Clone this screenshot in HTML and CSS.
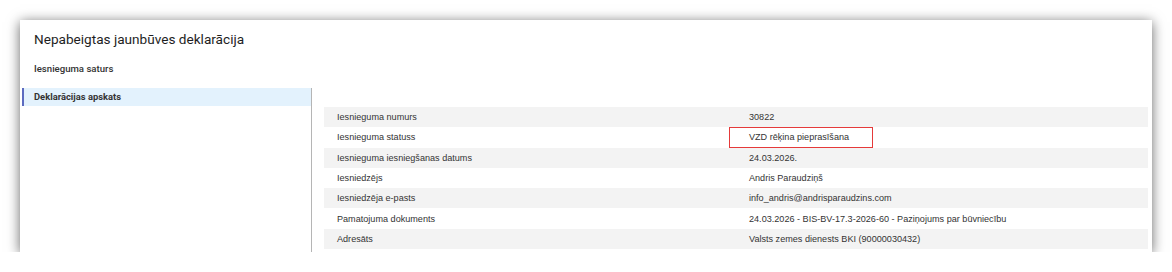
FILE: index.html
```html
<!DOCTYPE html>
<html>
  <head>
    <meta charset="UTF-8">
    <title>Nepabeigtas jaunbūves deklarācija</title>
    <link rel="stylesheet" href="styles.css">
  </head>
  <body>
    <div class="panel">
      <div class="head">
        <h1>Nepabeigtas jaunbūves deklarācija</h1>
        <h2>Iesnieguma saturs</h2>
      </div>
      <div class="main">
        <div class="side">
          <div class="side-item active">Deklarācijas apskats</div>
        </div>
        <div class="content">
          <div class="rows">
            <div class="row"><div class="cell">Iesnieguma numurs</div><div class="cell val">30822</div></div>
            <div class="row"><div class="cell">Iesnieguma statuss</div><div class="cell val"><span class="mark">VZD rēķina pieprasīšana</span></div></div>
            <div class="row"><div class="cell">Iesnieguma iesniegšanas datums</div><div class="cell val">24.03.2026.</div></div>
            <div class="row"><div class="cell">Iesniedzējs</div><div class="cell val">Andris Paraudziņš</div></div>
            <div class="row"><div class="cell">Iesniedzēja e-pasts</div><div class="cell val">info_andris@andrisparaudzins.com</div></div>
            <div class="row"><div class="cell">Pamatojuma dokuments</div><div class="cell val">24.03.2026 - BIS-BV-17.3-2026-60 - Paziņojums par būvniecību</div></div>
            <div class="row"><div class="cell">Adresāts</div><div class="cell val">Valsts zemes dienests BKI (90000030432)</div></div>
          </div>
        </div>
      </div>
    </div>
  </body>
</html>
```

FILE: styles.css
```css
body {
  margin: 0;
  background: #fff;
  font-family: Roboto, "Liberation Sans", Arial, sans-serif;
}
.panel {
  margin: 20px 20px 0 20px;
  height: 232px;
  background: #fff;
  box-shadow: 0 2px 12px rgba(0, 0, 0, 0.6);
  display: flex;
  flex-direction: column;
}
.head {
  padding: 9px 14px 0 14px;
}
.head h1 {
  margin: 0;
  font-size: 13.6px;
  line-height: 20px;
  font-weight: 400;
  color: #1e1e1e;
}
.head h2 {
  margin: 14px 0 0 0;
  font-size: 9.6px;
  line-height: 12px;
  font-weight: 500;
  color: #333;
}
.main {
  flex: 1;
  display: flex;
  margin-top: 13px;
  padding-left: 2px;
}
.side {
  width: 289px;
  border-right: 1px solid #b5b5b5;
}
.side-item {
  height: 18px;
  line-height: 18px;
  padding-left: 10px;
  font-size: 9.4px;
  font-weight: 700;
  color: #333;
}
.side-item.active {
  background: #e3f2fd;
  border-left: 2px solid #5c6bc0;
}
.content {
  flex: 1;
  padding: 19px 4px 0 12px;
}
.row {
  display: grid;
  grid-template-columns: 1fr 1fr;
  height: 20.3px;
  align-items: center;
  font-family: "Liberation Sans", Arial, sans-serif;
  font-size: 9.1px;
  color: #333;
}
.row:nth-child(odd) {
  background: #f3f3f3;
}
.cell {
  padding: 0 13px;
}
.mark {
  position: relative;
}
.mark::after {
  content: "";
  position: absolute;
  left: -20px;
  right: -24px;
  top: -5px;
  bottom: -6px;
  border: 1.5px solid #e53a3a;
}
```
